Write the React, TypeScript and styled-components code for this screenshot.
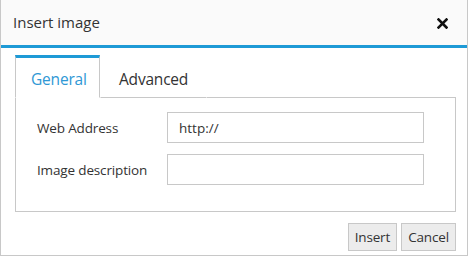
import styled, { createGlobalStyle } from 'styled-components';

const GlobalStyle = createGlobalStyle`
  body {
    margin: 0;
    background: #ffffff;
    font-family: 'Open Sans', 'Noto Sans', sans-serif;
    color: #333333;
  }
`;

const fields = [
  { label: 'Web Address', value: 'http://' },
  { label: 'Image description', value: '' },
];

export default function App() {
  return (
    <>
      <GlobalStyle />
      <Dialog>
        <Header>
          <Title>Insert image</Title>
          <CloseButton aria-label='Close'>
            <svg width='11' height='11' viewBox='0 0 11 11'>
              <path d='M1.5 1.5 L9.5 9.5 M9.5 1.5 L1.5 9.5' stroke='#111' strokeWidth='2.6' strokeLinecap='square' />
            </svg>
          </CloseButton>
        </Header>
        <Body>
          <TabList>
            <Tab $active>General</Tab>
            <Tab>Advanced</Tab>
            <TabFill />
          </TabList>
          <Panel>
            {fields.map((item) => (
              <FieldRow key={item.label}>
                <Label>{item.label}</Label>
                <Input defaultValue={item.value} />
              </FieldRow>
            ))}
          </Panel>
          <Footer>
            <Button>Insert</Button>
            <Button>Cancel</Button>
          </Footer>
        </Body>
      </Dialog>
    </>
  );
}

const Dialog = styled.div`
  width: 468px;
  height: 256px;
  box-sizing: border-box;
  border: 1px solid #c8c8c8;
  border-top: none;
  background: #ffffff;
  display: flex;
  flex-direction: column;
`;

const Header = styled.div`
  height: 45px;
  background: #fafafa;
  border-bottom: 3px solid #1e9ad6;
  display: flex;
  align-items: center;
  justify-content: space-between;
  padding: 0 19px 0 12px;
`;

const Title = styled.div`
  font-size: 15px;
  color: #333333;
  padding-bottom: 2px;
`;

const CloseButton = styled.button`
  border: none;
  background: none;
  padding: 0;
  display: flex;
  margin-top: 2px;
`;

const Body = styled.div`
  padding: 7px 11px 0 14px;
  display: flex;
  flex-direction: column;
`;

const TabList = styled.div`
  display: flex;
  height: 43px;
`;

const Tab = styled.div<{ $active?: boolean }>`
  box-sizing: border-box;
  height: 43px;
  display: flex;
  align-items: center;
  padding: 2px ${(p) => (p.$active ? '15px' : '18px')} 0;
  font-size: 15.5px;
  letter-spacing: -0.2px;
  color: ${(p) => (p.$active ? '#2f98d5' : '#333333')};
  border-top: 3px solid ${(p) => (p.$active ? '#1e9ad6' : 'transparent')};
  border-left: 1px solid ${(p) => (p.$active ? '#c8c8c8' : 'transparent')};
  border-right: 1px solid ${(p) => (p.$active ? '#c8c8c8' : 'transparent')};
  border-bottom: 1px solid ${(p) => (p.$active ? 'transparent' : '#c8c8c8')};
  width: ${(p) => (p.$active ? '85px' : 'auto')};
`;

const TabFill = styled.div`
  flex: 1;
  border-bottom: 1px solid #c8c8c8;
`;

const Panel = styled.div`
  box-sizing: border-box;
  height: 114px;
  border: 1px solid #c8c8c8;
  border-top: none;
  padding: 14px 0 0 21px;
  display: flex;
  flex-direction: column;
  gap: 11px;
`;

const FieldRow = styled.div`
  display: flex;
  align-items: center;
`;

const Label = styled.div`
  width: 130px;
  font-size: 13.5px;
  letter-spacing: -0.15px;
  color: #333333;
  padding-top: 1px;
`;

const Input = styled.input`
  box-sizing: border-box;
  width: 257px;
  height: 31px;
  border: 1px solid #c8c8c8;
  padding: 0 11px;
  font-family: 'Open Sans', 'Noto Sans', sans-serif;
  font-size: 13.5px;
  color: #333333;
  outline: none;
`;

const Footer = styled.div`
  display: flex;
  justify-content: flex-end;
  gap: 4px;
  margin-top: 11px;
`;

const Button = styled.button`
  box-sizing: border-box;
  height: 28px;
  padding: 0 6px;
  background: #ececec;
  border: 1px solid #c8c8c8;
  font-family: 'Open Sans', 'Noto Sans', sans-serif;
  font-size: 13.5px;
  letter-spacing: -0.15px;
  color: #333333;
`;
